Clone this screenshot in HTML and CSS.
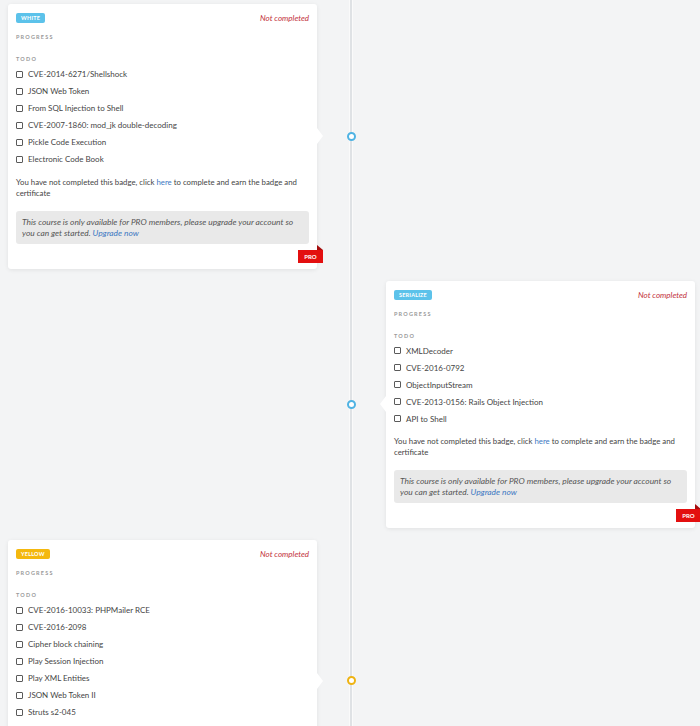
FILE: index.html
```html
<!DOCTYPE html>
<html lang="en">
<head>
<meta charset="utf-8">
<title>Badges</title>
<link rel="stylesheet" href="styles.css">
</head>
<body>
<main class="timeline">

  <section class="row">
    <article class="card card-left">
      <header class="card-head">
        <span class="badge badge-blue">White</span>
        <span class="status">Not completed</span>
      </header>
      <h4 class="label label-progress">Progress</h4>
      <div class="progress"></div>
      <h4 class="label">Todo</h4>
      <ul class="todo">
        <li><span class="box"></span>CVE-2014-6271/Shellshock</li>
        <li><span class="box"></span>JSON Web Token</li>
        <li><span class="box"></span>From SQL Injection to Shell</li>
        <li><span class="box"></span>CVE-2007-1860: mod_jk double-decoding</li>
        <li><span class="box"></span>Pickle Code Execution</li>
        <li><span class="box"></span>Electronic Code Book</li>
      </ul>
      <p class="note">You have not completed this badge, click <a href="#">here</a> to complete and earn the badge and certificate</p>
      <div class="pro-msg">This course is only available for PRO members, please upgrade your account so you can get started. <a href="#">Upgrade now</a></div>
      <span class="ribbon">PRO</span>
    </article>
    <div class="node"><span class="dot dot-blue"></span></div>
  </section>

  <section class="row row-right">
    <article class="card card-right">
      <header class="card-head">
        <span class="badge badge-blue">Serialize</span>
        <span class="status">Not completed</span>
      </header>
      <h4 class="label label-progress">Progress</h4>
      <div class="progress"></div>
      <h4 class="label">Todo</h4>
      <ul class="todo">
        <li><span class="box"></span>XMLDecoder</li>
        <li><span class="box"></span>CVE-2016-0792</li>
        <li><span class="box"></span>ObjectInputStream</li>
        <li><span class="box"></span>CVE-2013-0156: Rails Object Injection</li>
        <li><span class="box"></span>API to Shell</li>
      </ul>
      <p class="note">You have not completed this badge, click <a href="#">here</a> to complete and earn the badge and certificate</p>
      <div class="pro-msg">This course is only available for PRO members, please upgrade your account so you can get started. <a href="#">Upgrade now</a></div>
      <span class="ribbon">PRO</span>
    </article>
    <div class="node"><span class="dot dot-blue"></span></div>
  </section>

  <section class="row">
    <article class="card card-left">
      <header class="card-head">
        <span class="badge badge-yellow">Yellow</span>
        <span class="status">Not completed</span>
      </header>
      <h4 class="label label-progress">Progress</h4>
      <div class="progress"></div>
      <h4 class="label">Todo</h4>
      <ul class="todo">
        <li><span class="box"></span>CVE-2016-10033: PHPMailer RCE</li>
        <li><span class="box"></span>CVE-2016-2098</li>
        <li><span class="box"></span>Cipher block chaining</li>
        <li><span class="box"></span>Play Session Injection</li>
        <li><span class="box"></span>Play XML Entities</li>
        <li><span class="box"></span>JSON Web Token II</li>
        <li><span class="box"></span>Struts s2-045</li>
      </ul>
      <p class="note">You have not completed this badge, click <a href="#">here</a> to complete and earn the badge and certificate</p>
      <div class="pro-msg">This course is only available for PRO members, please upgrade your account so you can get started. <a href="#">Upgrade now</a></div>
      <span class="ribbon">PRO</span>
    </article>
    <div class="node"><span class="dot dot-yellow"></span></div>
  </section>

</main>
</body>
</html>
```

FILE: styles.css
```css
html, body {
  margin: 0;
  background: #f3f4f5;
}

body {
  font-family: Lato, "Open Sans", "Liberation Sans", sans-serif;
  color: #454545;
  overflow: hidden;
}

/* the vertical rail runs down the middle of the timeline */
.timeline {
  display: flex;
  flex-direction: column;
  gap: 12px;
  padding: 4px 0 40px 8px;
  background: linear-gradient(to right,
    transparent 0, transparent 349px,
    #fafafa 349px, #fafafa 350px,
    #dfe2e5 350px, #dfe2e5 352px,
    #fafafa 352px, #fafafa 353px,
    transparent 353px);
}

.row {
  display: grid;
  grid-template-columns: 309px 69px 309px;
  align-items: center;
}

.card {
  grid-row: 1;
  grid-column: 1;
  position: relative;
  background: #fff;
  border-radius: 3px;
  box-shadow: 0 1px 4px rgba(0, 0, 0, 0.08);
  padding: 9px 8px 25px;
}

.row-right .card {
  grid-column: 3;
}

/* pointer toward the rail */
.card::after {
  content: "";
  position: absolute;
  top: 50%;
  margin-top: -8px;
  width: 0;
  height: 0;
  border-top: 8px solid transparent;
  border-bottom: 8px solid transparent;
}

.card-left::after {
  right: -6px;
  border-left: 6px solid #fff;
}

.card-right::after {
  left: -6px;
  border-right: 6px solid #fff;
}

.node {
  grid-row: 1;
  grid-column: 2;
  display: flex;
  justify-content: center;
}

.dot {
  width: 9px;
  height: 9px;
  box-sizing: border-box;
  border: 2px solid;
  border-radius: 50%;
  background: #fff;
}

.dot-blue { border-color: #4fb3e3; }
.dot-yellow { border-color: #eeb313; }

.card-head {
  display: flex;
  justify-content: space-between;
  align-items: center;
  height: 10px;
}

.badge {
  display: inline-block;
  height: 10px;
  line-height: 10px;
  padding: 0 5px;
  border-radius: 2px;
  color: #fff;
  font-size: 5.5px;
  font-weight: 700;
  text-transform: uppercase;
  letter-spacing: 0.2px;
}

.badge-blue { background: #5cc2ea; }
.badge-yellow { background: #f4b80e; }

.status {
  color: #c2303a;
  font-style: italic;
  font-size: 8px;
}

.label {
  margin: 0;
  font-size: 5.5px;
  font-weight: 700;
  line-height: 10px;
  letter-spacing: 1.2px;
  text-transform: uppercase;
  color: #9a9a9a;
}

.label-progress {
  margin-top: 9px;
}

.progress {
  height: 12px;
}

.todo {
  list-style: none;
  margin: 1.5px 0 0;
  padding: 0;
}

.todo li {
  display: flex;
  align-items: center;
  gap: 5px;
  height: 17px;
  font-size: 8px;
}

.box {
  flex: none;
  width: 7px;
  height: 7px;
  box-sizing: border-box;
  border: 1px solid #5a5a5a;
  border-radius: 1px;
}

.note {
  margin: 9px 0 0;
  font-size: 7.8px;
  line-height: 11px;
}

.pro-msg {
  margin-top: 12px;
  padding: 6px 6px 5px;
  background: #e9e9e9;
  border-radius: 3px;
  font-style: italic;
  font-size: 8.4px;
  line-height: 11px;
  color: #555;
}

a {
  color: #3d78c2;
  text-decoration: none;
}

/* corner ribbon folding over the card edge */
.ribbon {
  position: absolute;
  right: -6px;
  bottom: 6px;
  width: 25px;
  height: 13px;
  display: flex;
  align-items: center;
  justify-content: center;
  background: #e30f0f;
  color: #fff;
  font-size: 6px;
  font-weight: 700;
}

.ribbon::before {
  content: "";
  position: absolute;
  right: 0;
  top: -5px;
  width: 0;
  height: 0;
  border-left: 6px solid #a50d0d;
  border-top: 5px solid transparent;
}
```
